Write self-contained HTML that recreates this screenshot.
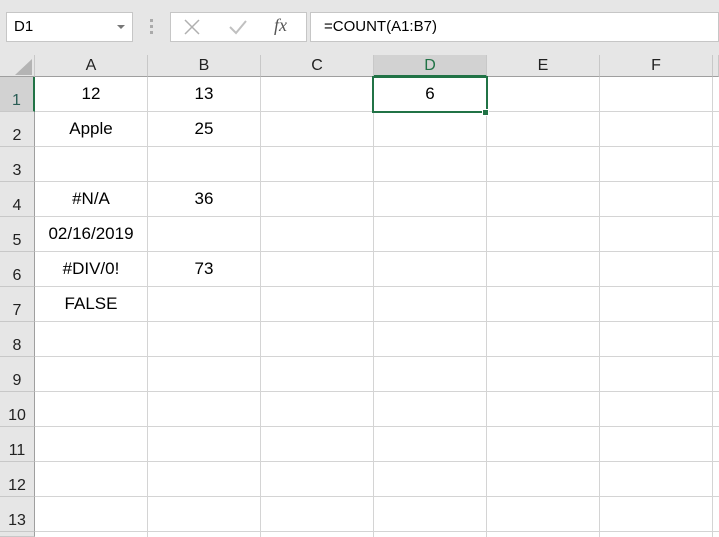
<!DOCTYPE html>
<html style="overflow:hidden"><head><meta charset="utf-8"><style>
*{margin:0;padding:0;box-sizing:border-box}
html,body{width:719px;height:537px;overflow:hidden}
body{background:#fff;font-family:"Liberation Sans",sans-serif;position:relative;color:#000}
.a{position:absolute}
.top{left:0;top:0;width:719px;height:55px;background:#e6e6e6}
.box{background:#fff;border:1px solid #c6c6c6}
.ch{position:absolute;top:55px;height:22px;background:#e6e6e6;border-right:1px solid #c8c8c8;border-bottom:1px solid #9f9f9f;text-align:center;font-size:16px;line-height:22px;color:#222}
.rh{position:absolute;left:0;width:35px;height:35px;background:#e6e6e6;border-bottom:1px solid #c8c8c8;border-right:1px solid #9f9f9f;font-size:16px;text-align:center;padding-top:15px;color:#222;line-height:18px}
.vl{position:absolute;top:77px;width:1px;height:460px;background:#d4d4d4}
.hl{position:absolute;left:35px;width:684px;height:1px;background:#d4d4d4}
.c{position:absolute;width:112px;text-align:center;font-size:17px;line-height:35px;height:35px}
</style></head><body>
<div class="a top"></div>
<div class="a box" style="left:6px;top:12px;width:127px;height:30px;font-size:15px;line-height:28px;padding-left:7px">D1</div>
<div class="a" style="left:117px;top:25px;width:0;height:0;border-left:4px solid transparent;border-right:4px solid transparent;border-top:4px solid #777"></div>
<div class="a" style="left:150px;top:19px;width:3px;height:3px;background:#aaa;box-shadow:0 6px 0 #aaa,0 12px 0 #aaa"></div>
<div class="a box" style="left:170px;top:12px;width:137px;height:30px"></div>
<svg class="a" style="left:183px;top:19px" width="18" height="16"><path d="M2 1L16 15M16 1L2 15" stroke="#b0b0b0" stroke-width="1.5"/></svg>
<svg class="a" style="left:228px;top:19px" width="20" height="16"><path d="M2 8L8 14L18 2" stroke="#c0c0c0" stroke-width="2" fill="none"/></svg>
<div class="a" style="left:274px;top:15px;font-family:'Liberation Serif',serif;font-style:italic;font-size:18px;color:#555">fx</div>
<div class="a box" style="left:310px;top:12px;width:409px;height:30px;font-size:15px;line-height:28px;padding-left:13px">=COUNT(A1:B7)</div>
<div class="a" style="left:0;top:55px;width:35px;height:22px;background:#e6e6e6;border-right:1px solid #c8c8c8;border-bottom:1px solid #9f9f9f"></div>
<svg class="a" style="left:15px;top:59px" width="17" height="16"><path d="M17 0L17 16L0 16Z" fill="#b4b4b4"/></svg>
<div class="ch" style="left:35px;width:113px">A</div>
<div class="ch" style="left:148px;width:113px">B</div>
<div class="ch" style="left:261px;width:113px">C</div>
<div class="ch" style="left:374px;width:113px;background:#d2d2d2;color:#217346;border-bottom:2px solid #217346">D</div>
<div class="ch" style="left:487px;width:113px">E</div>
<div class="ch" style="left:600px;width:113px">F</div>
<div class="ch" style="left:713px;width:6px"></div>
<div class="rh" style="top:77px;background:#d2d2d2;color:#2a5d55;border-right:2px solid #217346">1</div>
<div class="rh" style="top:112px">2</div>
<div class="rh" style="top:147px">3</div>
<div class="rh" style="top:182px">4</div>
<div class="rh" style="top:217px">5</div>
<div class="rh" style="top:252px">6</div>
<div class="rh" style="top:287px">7</div>
<div class="rh" style="top:322px">8</div>
<div class="rh" style="top:357px">9</div>
<div class="rh" style="top:392px">10</div>
<div class="rh" style="top:427px">11</div>
<div class="rh" style="top:462px">12</div>
<div class="rh" style="top:497px">13</div>
<div class="rh" style="top:532px;height:5px;padding:0"></div>
<div class="vl" style="left:147px"></div><div class="vl" style="left:260px"></div><div class="vl" style="left:373px"></div><div class="vl" style="left:486px"></div><div class="vl" style="left:599px"></div><div class="vl" style="left:712px"></div>
<div class="hl" style="top:111px"></div><div class="hl" style="top:146px"></div><div class="hl" style="top:181px"></div><div class="hl" style="top:216px"></div><div class="hl" style="top:251px"></div><div class="hl" style="top:286px"></div><div class="hl" style="top:321px"></div><div class="hl" style="top:356px"></div><div class="hl" style="top:391px"></div><div class="hl" style="top:426px"></div><div class="hl" style="top:461px"></div><div class="hl" style="top:496px"></div><div class="hl" style="top:531px"></div>
<div class="c" style="left:35px;top:76px">12</div>
<div class="c" style="left:148px;top:76px">13</div>
<div class="c" style="left:35px;top:111px">Apple</div>
<div class="c" style="left:148px;top:111px">25</div>
<div class="c" style="left:35px;top:181px">#N/A</div>
<div class="c" style="left:148px;top:181px">36</div>
<div class="c" style="left:35px;top:216px">02/16/2019</div>
<div class="c" style="left:35px;top:251px">#DIV/0!</div>
<div class="c" style="left:148px;top:251px">73</div>
<div class="c" style="left:35px;top:286px">FALSE</div>
<div class="a" style="left:372px;top:76px;width:116px;height:37px;border:2px solid #217346"></div>
<div class="c" style="left:374px;top:76px">6</div>
<div class="a" style="left:483px;top:110px;width:5px;height:5px;background:#217346;outline:1px solid #fff"></div>
</body></html>
